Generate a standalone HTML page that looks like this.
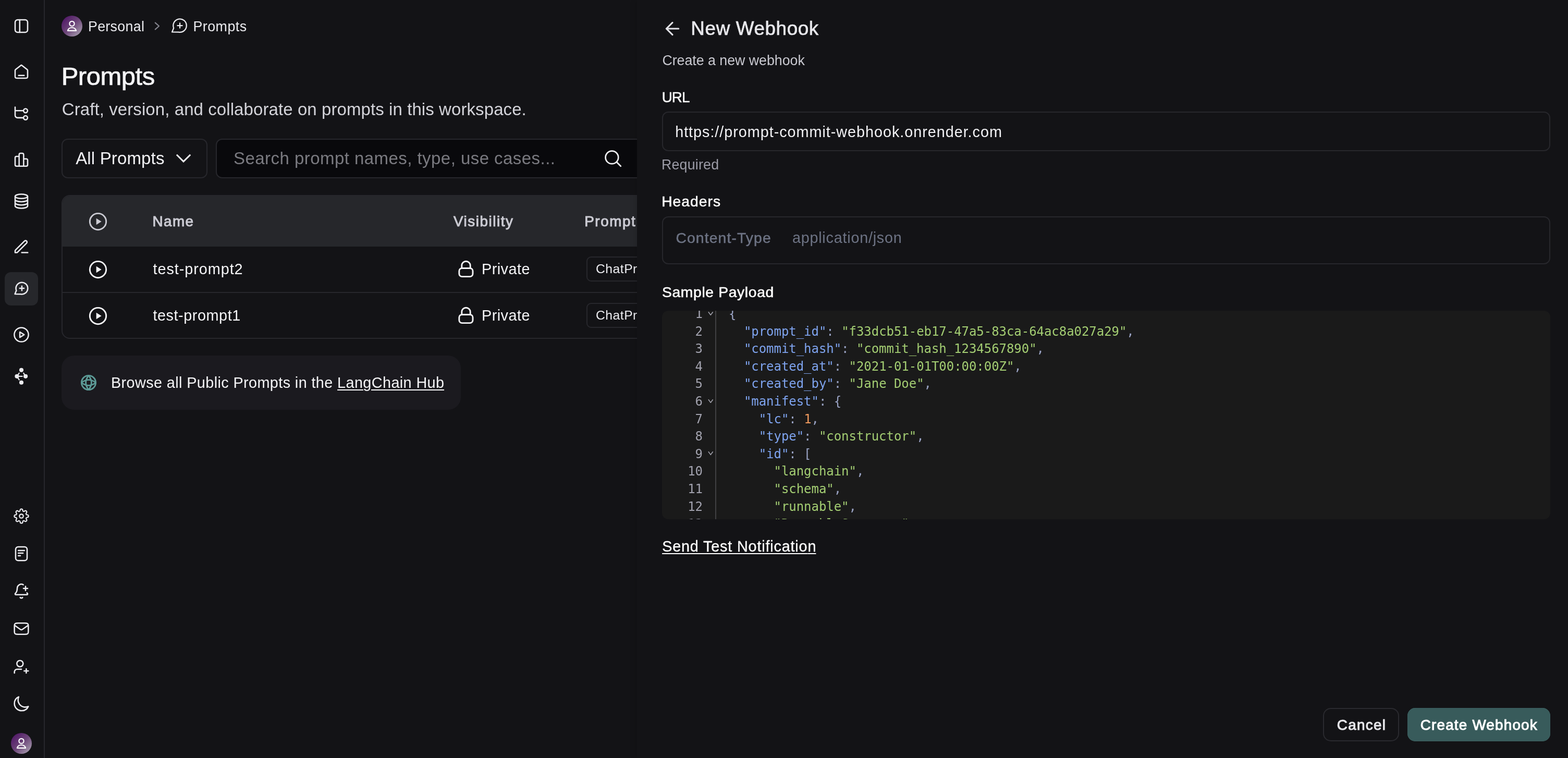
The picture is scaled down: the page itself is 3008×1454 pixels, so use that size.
<!DOCTYPE html>
<html lang="en">
<head>
<meta charset="utf-8">
<title>Prompts - New Webhook</title>
<style>
*{box-sizing:border-box}
html,body{margin:0;padding:0}
body{width:3008px;height:1454px;background:#131316;overflow:hidden;position:relative;font-family:"Liberation Sans",sans-serif;color:#fff}
.abs{position:absolute}
.tl{position:absolute;left:0;top:0;width:3008px;height:1454px;will-change:transform}
.t{position:absolute;white-space:pre;line-height:1.2;margin:0;padding:0;font-family:"Liberation Sans",sans-serif}
#left{position:absolute;left:0;top:0;width:1222px;height:1454px;overflow:hidden;background:#131316}
#side{position:absolute;left:0;top:0;width:86px;height:1454px;border-right:2px solid #27272c}
svg.ic{position:absolute;left:25px;width:32px;height:32px;fill:none;stroke:#ececf0;stroke-width:1.9;stroke-linecap:round;stroke-linejoin:round;overflow:visible}
svg.s{position:absolute;fill:none;stroke-linecap:round;stroke-linejoin:round;overflow:visible}
.av{position:absolute;width:40px;height:40px;border-radius:50%;background:linear-gradient(135deg,#521a68 12%,#6c4579 50%,#a89eaf 92%)}
.av svg{position:absolute;left:8px;top:7px;width:24px;height:24px;fill:none;stroke:#fff;stroke-width:2.2;stroke-linecap:round;stroke-linejoin:round}
#drawer{position:absolute;left:1222px;top:0;width:1786px;height:1454px;background:#131316;box-shadow:-4px 0 10px rgba(0,0,0,.10)}
.box{position:absolute;border:2px solid #27272c;border-radius:12px}
#code{position:absolute;left:1270px;top:596px;width:1704px;height:400px;background:#1a1a1a;border-radius:12px;overflow:hidden;font-family:"DejaVu Sans Mono","Liberation Mono",monospace;font-size:24px;line-height:33.6px;letter-spacing:-0.049px}
#code .gl{position:absolute;left:102px;top:0;width:2px;height:400px;background:#414143}
#code .l{position:absolute;left:0;white-space:pre;height:33.6px}
#code .n{position:absolute;left:0;width:78px;text-align:right;color:#a2a2ae}
#code .c{position:absolute;left:128.100px;color:#9aa3c4}
#code .k{color:#7ea3ee}
#code .s{color:#a3cd72}
#code .d{color:#f09a5e}
#code svg{position:absolute;left:87.900px;top:10.700px;width:10.600px;height:8.400px;fill:none;stroke:#a3a3ae;stroke-width:1.500;stroke-linecap:butt;stroke-linejoin:miter}
</style>
</head>
<body>
<div id="left">
  <nav id="side">
    <div class="abs" style="left:9px;top:522px;width:64px;height:64px;border-radius:12px;background:#26272b"></div>
    <!-- panel-left -->
    <svg class="ic" style="top:34px" viewBox="0 0 24 24"><rect x="3" y="3" width="18" height="18" rx="3.6"/><path d="M9.6 3v18"/></svg>
    <!-- home -->
    <svg class="ic" style="top:121.5px" viewBox="0 0 24 24"><path d="M8 17h8M11.018 2.764 4.235 8.039c-.453.353-.68.53-.843.75a2 2 0 0 0-.318.65C3 9.704 3 9.991 3 10.565V17.8c0 1.12 0 1.68.218 2.108a2 2 0 0 0 .874.874C4.52 21 5.08 21 6.2 21h11.6c1.12 0 1.68 0 2.108-.218a2 2 0 0 0 .874-.874C21 19.48 21 18.92 21 17.8v-7.235c0-.574 0-.861-.074-1.126a2.002 2.002 0 0 0-.318-.65c-.163-.22-.39-.397-.843-.75l-6.783-5.275c-.351-.273-.527-.41-.72-.462a1 1 0 0 0-.523 0c-.194.052-.37.189-.721.462Z"/></svg>
    <!-- tracing -->
    <svg class="ic" style="top:202px" viewBox="0 0 24 24"><path d="M3 2.6V14.4a3.5 3.5 0 0 0 3.5 3.5H15M3 7.75h12"/><circle cx="18" cy="7.75" r="2.9"/><circle cx="18" cy="17.9" r="2.9"/></svg>
    <!-- bar chart -->
    <svg class="ic" style="top:289.7px" viewBox="0 0 24 24"><path d="M8.75 21.5V5a2 2 0 0 1 2-2h2.5a2 2 0 0 1 2 2v16.5M8.75 7.5H5a2 2 0 0 0-2 2v10a2 2 0 0 0 2 2h14a2 2 0 0 0 2-2v-6.500a2 2 0 0 0-2-2h-3.750"/></svg>
    <!-- database -->
    <svg class="ic" style="top:370px" viewBox="0 0 24 24"><ellipse cx="12" cy="5" rx="9" ry="3.1"/><path d="M3 5v14c0 1.7 4 3.100 9 3.100s9-1.400 9-3.100V5M3 9.670c0 1.700 4 3.100 9 3.100s9-1.400 9-3.100M3 14.330c0 1.700 4 3.100 9 3.100s9-1.400 9-3.100"/></svg>
    <!-- pen -->
    <svg class="ic" style="top:457px" viewBox="0 0 24 24"><path d="M12.500 20.600h8.700M3 20.600h1.675c.489 0 .733 0 .963-.055.204-.05.399-.13.578-.24.202-.124.375-.297.721-.643L19.500 7.100a2.121 2.121 0 0 0-3-3L3.937 16.663c-.346.346-.519.519-.642.720a2 2 0 0 0-.240.579c-.055.230-.055.474-.055.963V20.600Z"/></svg>
    <!-- chat plus (active) -->
    <svg class="ic" style="top:537px;left:25.300px" viewBox="0 0 24 24"><path d="M11.200 20.400A8.500 8.500 0 1 0 4.800 15.200L2.700 20.300Z"/><path d="M9.600 12h6.200M12.700 8.900v6.200"/></svg>
    <!-- play circle -->
    <svg class="ic" style="top:625.800px" viewBox="0 0 24 24"><circle cx="12" cy="12" r="10.200"/><path d="M9.800 8.200 16 12l-6.200 3.800Z"/></svg>
    <!-- graph -->
    <svg class="ic" style="top:706px" viewBox="0 0 24 24"><path d="M5.600 11.900 8.850 7.200M18.050 11.900 15.150 7.200M5.600 11.900h7.750M5.600 11.900l3.250 5.050" stroke-width="1.600"/><g fill="#ececf0" stroke="none"><circle cx="12" cy="2.900" r="3.050"/><circle cx="5.600" cy="11.900" r="3.050"/><circle cx="18.050" cy="11.900" r="3.050"/><circle cx="12" cy="20.850" r="3.050"/></g></svg>
    <!-- gear -->
    <svg class="ic" style="top:974px" viewBox="0 0 24 24"><g transform="translate(12 12) scale(.93) translate(-12 -12)" stroke-width="1.770"><circle cx="12" cy="12" r="3"/><path d="M19.400 15a1.650 1.650 0 0 0 .33 1.820l.06.060a2 2 0 0 1 0 2.830 2 2 0 0 1-2.830 0l-.06-.060a1.650 1.650 0 0 0-1.820-.330 1.650 1.650 0 0 0-1 1.510V21a2 2 0 0 1-2 2 2 2 0 0 1-2-2v-.090A1.650 1.650 0 0 0 9 19.400a1.650 1.650 0 0 0-1.820.330l-.06.060a2 2 0 0 1-2.830 0 2 2 0 0 1 0-2.830l.06-.060a1.650 1.650 0 0 0 .33-1.820 1.650 1.650 0 0 0-1.510-1H3a2 2 0 0 1-2-2 2 2 0 0 1 2-2h.090A1.650 1.650 0 0 0 4.600 9a1.650 1.650 0 0 0-.33-1.820l-.06-.060a2 2 0 0 1 0-2.830 2 2 0 0 1 2.830 0l.06.060a1.650 1.650 0 0 0 1.820.330H9a1.650 1.650 0 0 0 1-1.510V3a2 2 0 0 1 2-2 2 2 0 0 1 2 2v.090a1.650 1.650 0 0 0 1 1.510 1.650 1.650 0 0 0 1.820-.330l.06-.060a2 2 0 0 1 2.830 0 2 2 0 0 1 0 2.830l-.06.060a1.650 1.650 0 0 0-.33 1.820V9a1.650 1.650 0 0 0 1.510 1H21a2 2 0 0 1 2 2 2 2 0 0 1-2 2h-.090a1.650 1.650 0 0 0-1.510 1z"/></g></svg>
    <!-- doc -->
    <svg class="ic" style="top:1045.800px" viewBox="0 0 24 24"><rect x="3.750" y="2.200" width="16.500" height="19.800" rx="3.600"/><path d="M7.600 7.500h8.800M7.600 11.250h6.800M7.600 15h2.900"/></svg>
    <!-- bell plus -->
    <svg class="ic" style="top:1118px" viewBox="0 0 24 24"><path d="M10.268 21a2 2 0 0 0 3.464 0M15 8h6M18 5v6M20.002 14.464a9 9 0 0 0 .738.863A1 1 0 0 1 20 17H4a1 1 0 0 1-.74-1.673C4.590 13.956 6 12.499 6 8a6 6 0 0 1 8.750-5.332"/></svg>
    <!-- mail -->
    <svg class="ic" style="top:1190px" viewBox="0 0 24 24"><path d="m2 7 8.165 5.715c.661.463.992.695 1.351.784a2 2 0 0 0 .968 0c.36-.09.690-.32 1.351-.784L22 7M6.800 20h10.400c1.680 0 2.520 0 3.162-.327a3 3 0 0 0 1.311-1.311C22 17.720 22 16.880 22 15.200V8.800c0-1.680 0-2.520-.327-3.162a3 3 0 0 0-1.311-1.311C19.720 4 18.880 4 17.200 4H6.800c-1.680 0-2.520 0-3.162.327a3 3 0 0 0-1.311 1.311C2 6.280 2 7.120 2 8.800v6.400c0 1.680 0 2.520.327 3.162a3 3 0 0 0 1.311 1.311C4.280 20 5.120 20 6.800 20Z"/></svg>
    <!-- user plus -->
    <svg class="ic" style="top:1262.600px" viewBox="0 0 24 24"><path d="M12 15.500H7.500c-1.396 0-2.093 0-2.661.172a4 4 0 0 0-2.667 2.667C2 18.907 2 19.604 2 21M19 21v-6m-3 3h6M14.500 7.500a4.500 4.500 0 1 1-9 0 4.500 4.500 0 0 1 9 0Z"/></svg>
    <!-- moon -->
    <svg class="ic" style="top:1334px" viewBox="0 0 24 24"><path d="M22 15.844a10.424 10.424 0 0 1-4.306.925c-5.779 0-10.463-4.684-10.463-10.462 0-1.536.330-2.994.925-4.307A10.464 10.464 0 0 0 2 11.538C2 17.316 6.684 22 12.462 22c4.243 0 7.896-2.526 9.538-6.156Z"/></svg>
    <div class="av" style="left:21px;top:1406px"><svg viewBox="0 0 24 24"><circle cx="12" cy="8.400" r="4.600"/><path d="M3.900 21.900Q5.400 16 12 16Q18.600 16 20.100 21.900Z"/></svg></div>
  </nav>

  <!-- breadcrumb -->
  <div class="av" style="left:118.200px;top:29.900px"><svg viewBox="0 0 24 24"><circle cx="12" cy="8.400" r="4.600"/><path d="M3.900 21.900Q5.400 16 12 16Q18.600 16 20.100 21.900Z"/></svg></div>
  <svg class="s" style="left:290px;top:38px;width:24px;height:24px;stroke:#84848e;stroke-width:2.200" viewBox="0 0 24 24"><path d="M7.800 5.600 15 12l-7.200 6.400" transform="translate(0 0)"/></svg>
  <svg class="s" style="left:326.200px;top:30.650px;width:36px;height:36px;stroke:#ececf0;stroke-width:1.500" viewBox="0 0 24 24"><path d="M11.200 20.400A8.500 8.500 0 1 0 4.800 15.200L2.700 20.300Z"/><path d="M9.600 12h6.200M12.700 8.900v6.200"/></svg>

  <!-- filter row -->
  <div class="box" style="left:118px;top:266px;width:280px;height:76px"></div>
  <svg class="s" style="left:336px;top:288px;width:32px;height:32px;stroke:#f2f2f5;stroke-width:3;stroke-linecap:butt;stroke-linejoin:miter" viewBox="0 0 32 32"><path d="M2.900 8.700 16 21.900 29.200 8.700"/></svg>
  <div class="box" style="left:414px;top:266px;width:900px;height:76px;background:#09090c"></div>
  <svg class="s" style="left:1157.600px;top:286px;width:36px;height:36px;stroke:#f2f2f5;stroke-width:2.700" viewBox="0 0 36 36"><circle cx="15.900" cy="15.900" r="12.300"/><path d="M24.800 24.800 32.800 32.800"/></svg>

  <!-- table -->
  <div class="abs" style="left:118px;top:374px;width:1300px;height:276px;border:2px solid #27272c;border-radius:16px;overflow:hidden">
    <div class="abs" style="left:0;top:0;width:1300px;height:96.500px;background:#26272b"></div>
    <div class="abs" style="left:0;top:184px;width:1300px;height:2px;background:#27272c"></div>
  </div>
  <svg class="s" style="left:168px;top:405px;width:40px;height:40px;stroke:#cbcbd3;stroke-width:1.750" viewBox="0 0 24 24"><circle cx="12" cy="12" r="9.400"/><path d="M10 8.300 16 12l-6 3.700Z" fill="#cbcbd3" stroke="none"/></svg>
  <svg class="s" style="left:168px;top:497px;width:40px;height:40px;stroke:#f5f5f7;stroke-width:1.750" viewBox="0 0 24 24"><circle cx="12" cy="12" r="9.400"/><path d="M10 8.300 16 12l-6 3.700Z" fill="#f5f5f7" stroke="none"/></svg>
  <svg class="s" style="left:168px;top:586px;width:40px;height:40px;stroke:#f5f5f7;stroke-width:1.750" viewBox="0 0 24 24"><circle cx="12" cy="12" r="9.400"/><path d="M10 8.300 16 12l-6 3.700Z" fill="#f5f5f7" stroke="none"/></svg>
  <svg class="s" style="left:873.600px;top:496px;width:40px;height:40px;stroke:#f5f5f7;stroke-width:1.750" viewBox="0 0 24 24"><rect x="4.100" y="11.100" width="15.700" height="9.650" rx="3.300"/><path d="M7.100 11.100V8a4.900 4.900 0 0 1 9.800 0v3.100"/></svg>
  <svg class="s" style="left:873.600px;top:585px;width:40px;height:40px;stroke:#f5f5f7;stroke-width:1.750" viewBox="0 0 24 24"><rect x="4.100" y="11.100" width="15.700" height="9.650" rx="3.300"/><path d="M7.100 11.100V8a4.900 4.900 0 0 1 9.800 0v3.100"/></svg>
  <div class="box" style="left:1125px;top:492px;width:300px;height:47.500px;border-radius:9px"></div>
  <div class="box" style="left:1125px;top:581px;width:300px;height:47.500px;border-radius:9px"></div>

  <!-- banner -->
  <div class="abs" style="left:118px;top:682px;width:766px;height:104px;border-radius:24px;background:#1b1a1f"></div>
  <svg class="s" style="left:152px;top:715.900px;width:36px;height:36px;stroke:#5c9a96;stroke-width:1.900" viewBox="0 0 24 24"><circle cx="12" cy="12" r="9.070"/><path d="M12 2.930Q19.200 12 12 21.070Q4.800 12 12 2.930ZM2.930 12Q12 4.800 21.070 12Q12 19.200 2.930 12Z"/></svg>

<div class="tl"><span class="t" style="left:169.00px;top:35.10px;font-size:26.8px;font-weight:400;color:#e9e9ed;letter-spacing:0.299px;">Personal</span>
<span class="t" style="left:370.50px;top:35.10px;font-size:26.8px;font-weight:400;color:#e9e9ed;letter-spacing:0.472px;">Prompts</span>
<h1 class="t" style="left:117.65px;top:117.20px;font-size:49px;font-weight:400;color:#f5f5f7;letter-spacing:-0.489px;-webkit-text-stroke:0.7px #f5f5f7;">Prompts</h1>
<p class="t" style="left:118.80px;top:189.70px;font-size:33px;font-weight:400;color:#d3d3d9;letter-spacing:0.084px;">Craft, version, and collaborate on prompts in this workspace.</p>
<span class="t" style="left:145.20px;top:283.90px;font-size:33px;font-weight:400;color:#f2f2f5;letter-spacing:0.149px;">All Prompts</span>
<span class="t" style="left:448.00px;top:284.40px;font-size:33px;font-weight:400;color:#7a7a80;letter-spacing:0.452px;">Search prompt names, type, use cases...</span>
<span class="t" style="left:292.50px;top:408.20px;font-size:27.8px;font-weight:400;color:#cbcbd3;letter-spacing:1.437px;-webkit-text-stroke:1.0px #cbcbd3;">Name</span>
<span class="t" style="left:869.90px;top:408.20px;font-size:27.8px;font-weight:400;color:#cbcbd3;letter-spacing:1.578px;-webkit-text-stroke:1.0px #cbcbd3;">Visibility</span>
<span class="t" style="left:1121.20px;top:408.20px;font-size:27.8px;font-weight:400;color:#cbcbd3;letter-spacing:1.586px;-webkit-text-stroke:1.0px #cbcbd3;">Prompt Type</span>
<span class="t" style="left:293.50px;top:498.80px;font-size:28.8px;font-weight:400;color:#f5f5f7;letter-spacing:0.952px;">test-prompt2</span>
<span class="t" style="left:293.50px;top:587.70px;font-size:28.8px;font-weight:400;color:#f5f5f7;letter-spacing:0.552px;">test-prompt1</span>
<span class="t" style="left:924.00px;top:498.80px;font-size:28.8px;font-weight:400;color:#f5f5f7;letter-spacing:0.465px;">Private</span>
<span class="t" style="left:924.00px;top:587.70px;font-size:28.8px;font-weight:400;color:#f5f5f7;letter-spacing:0.465px;">Private</span>
<span class="t" style="left:1143.00px;top:500.90px;font-size:24.7px;font-weight:400;color:#ececf0;letter-spacing:0.500px;">ChatPromptTemplate</span>
<span class="t" style="left:1143.00px;top:589.80px;font-size:24.7px;font-weight:400;color:#ececf0;letter-spacing:0.500px;">ChatPromptTemplate</span>
<span class="t" style="left:213.00px;top:716.90px;font-size:28.8px;font-weight:400;color:#f5f5f7;letter-spacing:0.399px;">Browse all Public Prompts in the <span style="text-decoration:underline;text-decoration-thickness:2px;text-underline-offset:3px">LangChain Hu</span><span style="text-decoration:underline;text-decoration-thickness:2px;text-underline-offset:3px;letter-spacing:0">b</span></span></div>
</div>

<div id="drawer"></div>
<!-- drawer header -->
<svg class="s" style="left:1269.700px;top:34.500px;width:40px;height:40px;stroke:#e2e2e7;stroke-width:1.900" viewBox="0 0 24 24"><path d="M19 12H5M12 19l-7-7 7-7"/></svg>
<div class="box" style="left:1270px;top:214px;width:1704px;height:76px"></div>
<div class="box" style="left:1270px;top:415px;width:1704px;height:92px"></div>
<div id="code">
<div class="gl"></div>
<div class="l" style="top:-10.1px"><span class="n">1</span><svg viewBox="0 0 10.6 8.4"><path d="M0.900 1.300 5.300 7.300 9.700 1.300"/></svg><span class="c">{</span></div>
<div class="l" style="top:23.5px"><span class="n">2</span><span class="c">  <span class="k">&quot;prompt_id&quot;</span>: <span class="s">&quot;f33dcb51-eb17-47a5-83ca-64ac8a027a29&quot;</span>,</span></div>
<div class="l" style="top:57.1px"><span class="n">3</span><span class="c">  <span class="k">&quot;commit_hash&quot;</span>: <span class="s">&quot;commit_hash_1234567890&quot;</span>,</span></div>
<div class="l" style="top:90.7px"><span class="n">4</span><span class="c">  <span class="k">&quot;created_at&quot;</span>: <span class="s">&quot;2021-01-01T00:00:00Z&quot;</span>,</span></div>
<div class="l" style="top:124.3px"><span class="n">5</span><span class="c">  <span class="k">&quot;created_by&quot;</span>: <span class="s">&quot;Jane Doe&quot;</span>,</span></div>
<div class="l" style="top:157.9px"><span class="n">6</span><svg viewBox="0 0 10.6 8.4"><path d="M0.900 1.300 5.300 7.300 9.700 1.300"/></svg><span class="c">  <span class="k">&quot;manifest&quot;</span>: {</span></div>
<div class="l" style="top:191.5px"><span class="n">7</span><span class="c">    <span class="k">&quot;lc&quot;</span>: <span class="d">1</span>,</span></div>
<div class="l" style="top:225.1px"><span class="n">8</span><span class="c">    <span class="k">&quot;type&quot;</span>: <span class="s">&quot;constructor&quot;</span>,</span></div>
<div class="l" style="top:258.7px"><span class="n">9</span><svg viewBox="0 0 10.6 8.4"><path d="M0.900 1.300 5.300 7.300 9.700 1.300"/></svg><span class="c">    <span class="k">&quot;id&quot;</span>: [</span></div>
<div class="l" style="top:292.3px"><span class="n">10</span><span class="c">      <span class="s">&quot;langchain&quot;</span>,</span></div>
<div class="l" style="top:325.9px"><span class="n">11</span><span class="c">      <span class="s">&quot;schema&quot;</span>,</span></div>
<div class="l" style="top:359.5px"><span class="n">12</span><span class="c">      <span class="s">&quot;runnable&quot;</span>,</span></div>
<div class="l" style="top:393.1px"><span class="n">13</span><span class="c">      <span class="s">&quot;RunnableSequence&quot;</span></span></div>
</div>
<div class="box" style="left:2538px;top:1358px;width:145.500px;height:64px;border-radius:15px;border-color:#2a2a2f"></div>
<div class="abs" style="left:2700px;top:1358px;width:274px;height:64px;border-radius:15px;background:#385b5b;box-shadow:inset 0 0 0 1px #3c6060"></div>
<div class="tl"><h2 class="t" style="left:1325.35px;top:33.10px;font-size:36.8px;font-weight:400;color:#e7e7eb;letter-spacing:0.628px;-webkit-text-stroke:0.7px #e7e7eb;">New Webhook</h2>
<p class="t" style="left:1270.40px;top:100.10px;font-size:26.8px;font-weight:400;color:#c9c9d0;letter-spacing:-0.037px;">Create a new webhook</p>
<label class="t" style="left:1269.65px;top:169.70px;font-size:27.8px;font-weight:400;color:#ffffff;letter-spacing:-0.924px;-webkit-text-stroke:0.5px #ffffff;">URL</label>
<span class="t" style="left:1295.20px;top:235.50px;font-size:28.8px;font-weight:400;color:#f2f2f5;letter-spacing:0.959px;">https://prompt-commit-webhook.onrender.com</span>
<span class="t" style="left:1268.90px;top:300.00px;font-size:26.8px;font-weight:400;color:#9c9ca7;letter-spacing:0.208px;">Required</span>
<label class="t" style="left:1269.15px;top:369.70px;font-size:28.3px;font-weight:400;color:#ffffff;letter-spacing:1.015px;-webkit-text-stroke:0.5px #ffffff;">Headers</label>
<span class="t" style="left:1296.45px;top:439.50px;font-size:28.3px;font-weight:400;color:#6d7384;letter-spacing:1.124px;-webkit-text-stroke:0.5px #6d7384;">Content-Type</span>
<span class="t" style="left:1519.90px;top:438.50px;font-size:28.8px;font-weight:400;color:#6d7384;letter-spacing:0.760px;">application/json</span>
<label class="t" style="left:1269.95px;top:544.20px;font-size:28.3px;font-weight:400;color:#ffffff;letter-spacing:0.636px;-webkit-text-stroke:0.5px #ffffff;">Sample Payload</label>
<span class="t" style="left:1270.15px;top:1030.80px;font-size:28.8px;font-weight:400;color:#ffffff;letter-spacing:0.824px;-webkit-text-stroke:0.3px #ffffff;"><span style="text-decoration:underline;text-decoration-thickness:2px;text-underline-offset:3px">Send Test Notificatio</span><span style="text-decoration:underline;text-decoration-thickness:2px;text-underline-offset:3px;letter-spacing:0">n</span></span>
<span class="t" style="left:2564.80px;top:1374.10px;font-size:27.8px;font-weight:400;color:#e7e7eb;letter-spacing:1.330px;-webkit-text-stroke:1.0px #e7e7eb;">Cancel</span>
<span class="t" style="left:2724.70px;top:1374.10px;font-size:27.8px;font-weight:400;color:#ffffff;letter-spacing:1.224px;-webkit-text-stroke:1.0px #ffffff;">Create Webhook</span></div>
</body>
</html>
